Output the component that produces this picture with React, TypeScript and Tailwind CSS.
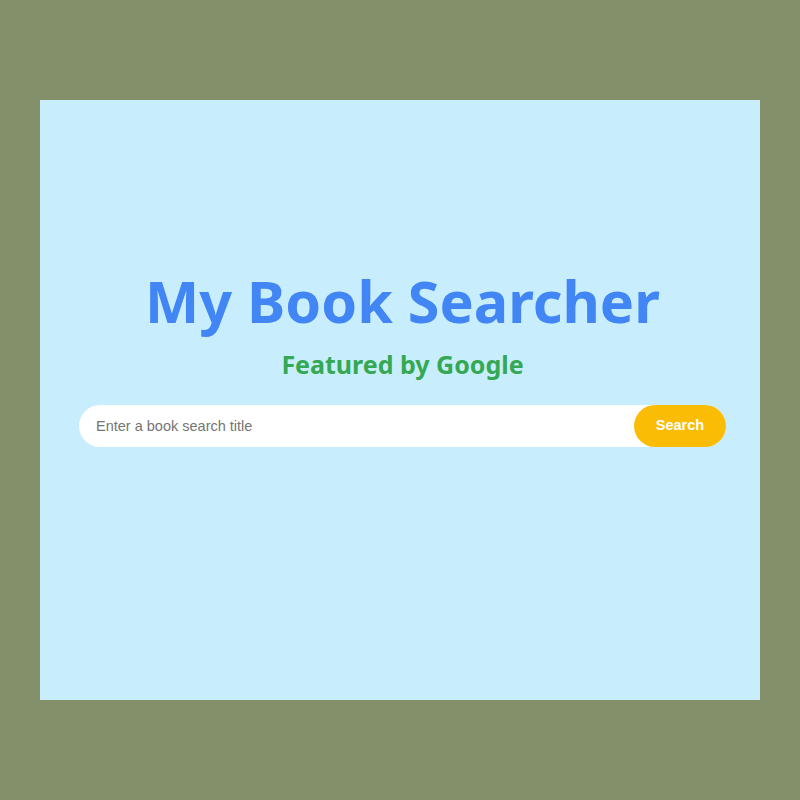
export default function App() {
  return (
    <div className="w-[800px] h-[800px] bg-[#84906a] flex items-center justify-center">
      <div className="w-[720px] h-[600px] bg-[#c8eefd] flex flex-col items-center justify-center pl-[39px] pr-[34px] pb-[80px]">
        <h1 className="text-[#4285f4] font-bold text-[57.5px] leading-none font-['Noto_Sans',sans-serif]">
          My Book Searcher
        </h1>
        <h2 className="mt-[22px] text-[#34a853] font-bold text-[25px] leading-none font-['Noto_Sans',sans-serif]">
          Featured by Google
        </h2>
        <div className="mt-[28px] w-full h-[42px] bg-white rounded-full flex items-center">
          <input
            className="flex-1 h-full bg-transparent outline-none pl-[17px] text-[14.5px] text-gray-700 placeholder:text-[#757575] font-['Liberation_Sans',Arial,sans-serif]"
            placeholder="Enter a book search title"
          />
          <button className="w-[92px] h-full rounded-full bg-[#fbbc05] text-white font-bold text-[14.5px] font-['Liberation_Sans',Arial,sans-serif]">
            Search
          </button>
        </div>
      </div>
    </div>
  );
}
